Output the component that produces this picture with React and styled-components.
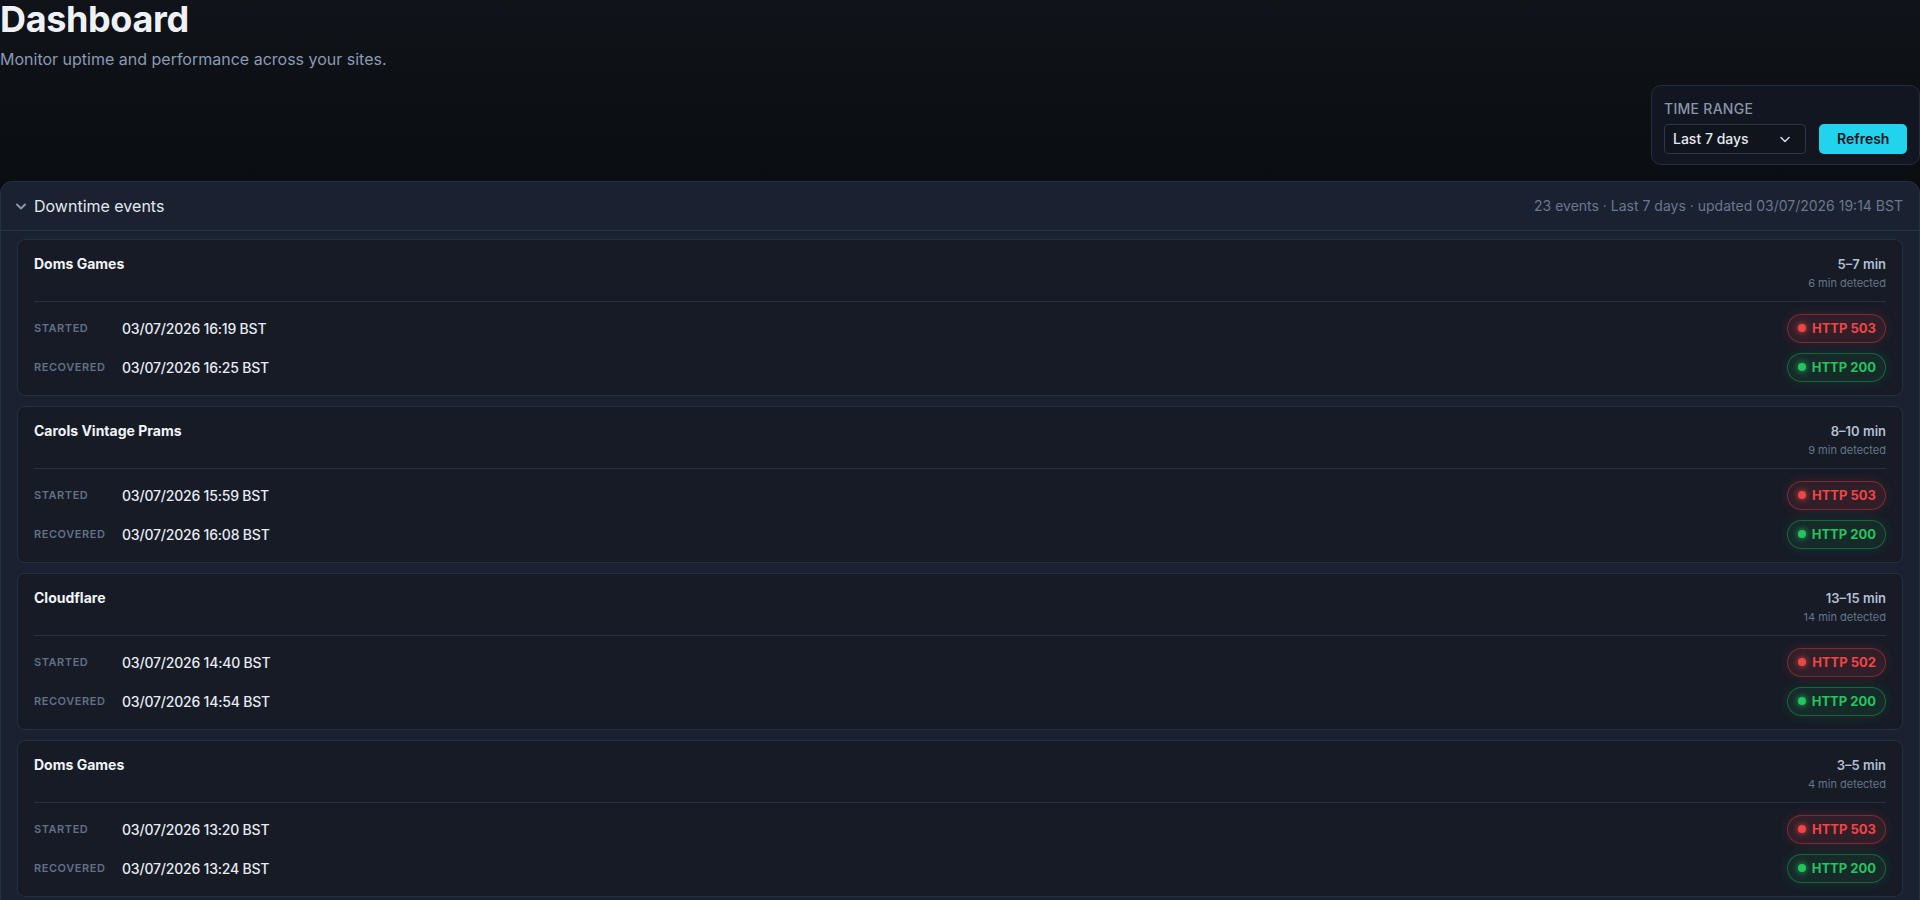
import React from "react";
import styled, { createGlobalStyle } from "styled-components";

const GlobalStyle = createGlobalStyle`
  * { box-sizing: border-box; }
  html, body { margin: 0; padding: 0; }
  body {
    background: #0a0d11;
    font-family: Inter, "Noto Sans", "Liberation Sans", sans-serif;
    color: #e2e8f0;
    -webkit-font-smoothing: antialiased;
  }
`;

const Page = styled.div`
  min-height: 100vh;
  background: linear-gradient(180deg, #10141a 0%, #0c0f14 120px, #0a0d11 190px, #0a0d11 100%);
`;

const Header = styled.header`
  display: flex;
  flex-direction: column;
`;

const Title = styled.h1`
  margin: 0;
  font-size: 36px;
  line-height: 1.1;
  font-weight: 700;
  letter-spacing: -0.01em;
  color: #eef2f7;
`;

const Subtitle = styled.p`
  margin: 7px 0 0;
  font-size: 16px;
  line-height: 24px;
  color: #8a9ab3;
`;

const Toolbar = styled.div`
  display: flex;
  justify-content: flex-end;
  margin-top: 14px;
`;

const ControlPanel = styled.div`
  display: flex;
  flex-direction: column;
  gap: 5px;
  width: 269px;
  padding: 13px 12px 10px;
  background: #111620;
  border: 1px solid #252e3d;
  border-radius: 10px;
`;

const ControlLabel = styled.div`
  font-size: 14px;
  line-height: 20px;
  font-weight: 500;
  letter-spacing: 0.02em;
  text-transform: uppercase;
  color: #8a96a8;
`;

const ControlRow = styled.div`
  display: flex;
  align-items: center;
  gap: 13px;
`;

const Select = styled.button`
  display: flex;
  align-items: center;
  justify-content: space-between;
  width: 143px;
  height: 30px;
  padding: 0 14px 0 8px;
  background: #0f141d;
  border: 1px solid #2d3748;
  border-radius: 4px;
  font-family: inherit;
  font-size: 14px;
  font-weight: 500;
  color: #e5e9ef;
  cursor: pointer;
`;

const RefreshButton = styled.button`
  width: 88px;
  height: 30px;
  border: none;
  border-radius: 5px;
  background: #22d3ee;
  font-family: inherit;
  font-size: 14px;
  font-weight: 600;
  color: #0b1220;
  cursor: pointer;
`;

const Section = styled.section`
  margin-top: 16px;
  background: #1a2130;
  border: 1px solid #263041;
  border-radius: 12px;
`;

const SectionHeader = styled.div`
  display: flex;
  align-items: center;
  justify-content: space-between;
  height: 49px;
  padding: 0 16px 0 14px;
  border-bottom: 1px solid #273244;
`;

const SectionTitle = styled.div`
  display: flex;
  align-items: center;
  gap: 7px;
  font-size: 16px;
  color: #e3e8ef;
`;

const SectionMeta = styled.div`
  font-size: 14px;
  color: #6b788d;
`;

const EventList = styled.div`
  display: flex;
  flex-direction: column;
  gap: 10px;
  padding: 8px 16px 16px;
`;

const Card = styled.article`
  background: #161b26;
  border: 1px solid #252f40;
  border-radius: 8px;
  padding: 14px 16px 13px;
`;

const CardHead = styled.div`
  display: flex;
  justify-content: space-between;
  align-items: flex-start;
  padding-bottom: 10px;
  border-bottom: 1px solid #273042;
`;

const SiteName = styled.div`
  font-size: 14px;
  line-height: 20px;
  font-weight: 700;
  color: #f1f4f8;
`;

const DurationBlock = styled.div`
  display: flex;
  flex-direction: column;
  align-items: flex-end;
  gap: 1px;
`;

const Duration = styled.div`
  font-size: 13px;
  line-height: 20px;
  font-weight: 600;
  color: #b2bfd2;
`;

const Detected = styled.div`
  font-size: 11px;
  line-height: 16px;
  color: #66758b;
`;

const Rows = styled.div`
  display: flex;
  flex-direction: column;
  gap: 10px;
  margin-top: 12px;
`;

const Row = styled.div`
  display: grid;
  grid-template-columns: 88px 1fr auto;
  align-items: center;
  height: 29px;
`;

const RowLabel = styled.div`
  font-size: 11px;
  font-weight: 600;
  letter-spacing: 0.05em;
  text-transform: uppercase;
  color: #627087;
`;

const RowValue = styled.div`
  font-size: 14px;
  font-weight: 500;
  letter-spacing: -0.2px;
  color: #e6ebf2;
`;

const tones = {
  bad: { fg: "#f04545", bg: "rgba(239, 68, 68, 0.12)", bd: "rgba(239, 68, 68, 0.38)", glow: "rgba(239, 68, 68, 0.18)" },
  good: { fg: "#22c55e", bg: "rgba(34, 197, 94, 0.09)", bd: "rgba(34, 197, 94, 0.38)", glow: "rgba(34, 197, 94, 0.16)" },
};

const Badge = styled.span`
  display: inline-flex;
  align-items: center;
  gap: 6px;
  height: 29px;
  padding: 0 9px 0 10px;
  border-radius: 999px;
  border: 1px solid ${(p) => tones[p.$tone].bd};
  background: ${(p) => tones[p.$tone].bg};
  box-shadow: 0 0 12px ${(p) => tones[p.$tone].glow};
  color: ${(p) => tones[p.$tone].fg};
  font-size: 13px;
  font-weight: 700;
  letter-spacing: 0;
`;

const Dot = styled.span`
  width: 8px;
  height: 8px;
  border-radius: 50%;
  background: ${(p) => tones[p.$tone].fg};
  box-shadow: 0 0 6px ${(p) => tones[p.$tone].fg};
`;

const Chevron = ({ size = 12, color = "#8a96a8", weight = 1.6 }) => (
  <svg width={size} height={size} viewBox="0 0 12 12" fill="none">
    <path d="M2 4.5 L6 8.5 L10 4.5" stroke={color} strokeWidth={weight} strokeLinecap="round" strokeLinejoin="round" />
  </svg>
);

const events = [
  { site: "Doms Games", range: "5–7 min", detected: "6 min detected", start: "03/07/2026 16:19 BST", end: "03/07/2026 16:25 BST", code: 503 },
  { site: "Carols Vintage Prams", range: "8–10 min", detected: "9 min detected", start: "03/07/2026 15:59 BST", end: "03/07/2026 16:08 BST", code: 503 },
  { site: "Cloudflare", range: "13–15 min", detected: "14 min detected", start: "03/07/2026 14:40 BST", end: "03/07/2026 14:54 BST", code: 502 },
  { site: "Doms Games", range: "3–5 min", detected: "4 min detected", start: "03/07/2026 13:20 BST", end: "03/07/2026 13:24 BST", code: 503 },
  { site: "Carols Vintage Prams", range: "4–6 min", detected: "5 min detected", start: "03/07/2026 11:02 BST", end: "03/07/2026 11:07 BST", code: 503 },
];

function EventCard({ e }) {
  return (
    <Card>
      <CardHead>
        <SiteName>{e.site}</SiteName>
        <DurationBlock>
          <Duration>{e.range}</Duration>
          <Detected>{e.detected}</Detected>
        </DurationBlock>
      </CardHead>
      <Rows>
        <Row>
          <RowLabel>Started</RowLabel>
          <RowValue>{e.start}</RowValue>
          <Badge $tone="bad"><Dot $tone="bad" />HTTP {e.code}</Badge>
        </Row>
        <Row>
          <RowLabel>Recovered</RowLabel>
          <RowValue>{e.end}</RowValue>
          <Badge $tone="good"><Dot $tone="good" />HTTP 200</Badge>
        </Row>
      </Rows>
    </Card>
  );
}

export default function App() {
  return (
    <>
      <GlobalStyle />
      <Page>
        <Header>
          <Title>Dashboard</Title>
          <Subtitle>Monitor uptime and performance across your sites.</Subtitle>
        </Header>
        <Toolbar>
          <ControlPanel>
            <ControlLabel>Time range</ControlLabel>
            <ControlRow>
              <Select>
                <span>Last 7 days</span>
                <Chevron size={12} color="#cbd5e1" />
              </Select>
              <RefreshButton>Refresh</RefreshButton>
            </ControlRow>
          </ControlPanel>
        </Toolbar>
        <Section>
          <SectionHeader>
            <SectionTitle>
              <Chevron size={12} color="#8a96a8" weight={2} />
              Downtime events
            </SectionTitle>
            <SectionMeta>23 events · Last 7 days · updated 03/07/2026 19:14 BST</SectionMeta>
          </SectionHeader>
          <EventList>
            {events.map((e, i) => (
              <EventCard key={i} e={e} />
            ))}
          </EventList>
        </Section>
      </Page>
    </>
  );
}
